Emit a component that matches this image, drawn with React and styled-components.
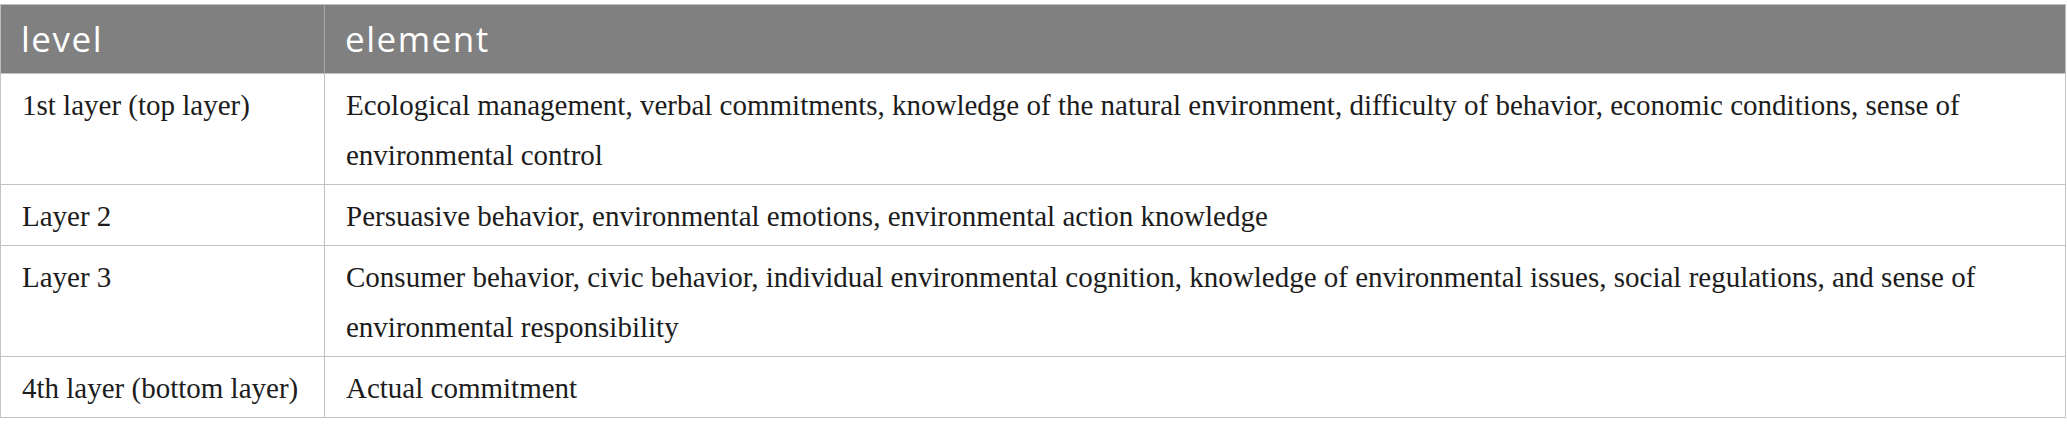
import React from "react";
import styled, { createGlobalStyle } from "styled-components";

const Global = createGlobalStyle`
  html, body { margin: 0; padding: 0; background: #ffffff; }
  body { font-family: "Liberation Serif", "Times New Roman", serif; }
`;

const Page = styled.div`
  padding-top: 4px;
  width: 2066px;
`;

const Table = styled.table`
  width: 100%;
  border-collapse: collapse;
  table-layout: fixed;
  border: 1px solid #bdbdbd;
`;

const HeadCell = styled.th`
  box-sizing: border-box;
  background: #808080;
  color: #ffffff;
  font-family: "Open Sans", "Noto Sans", sans-serif;
  font-weight: 400;
  font-size: 35px;
  letter-spacing: 1.5px;
  text-align: left;
  padding: 0 20px;
  height: 68px;
  line-height: 68px;
  border-left: 1px solid #a9a9a9;
  width: ${(p) => p.$w || "auto"};
  &:first-child { border-left: none; }
`;

const Cell = styled.td`
  font-family: "Liberation Serif", "Times New Roman", serif;
  font-size: 29px;
  line-height: 50px;
  color: #1c1c1c;
  vertical-align: top;
  text-align: left;
  padding: 6px 20px 4px 21px;
  border: 1px solid #c3c3c3;
`;

const rows = [
  {
    level: "1st layer (top layer)",
    element:
      "Ecological management, verbal commitments, knowledge of the natural environment, difficulty of behavior, economic conditions, sense of environmental control",
  },
  {
    level: "Layer 2",
    element:
      "Persuasive behavior, environmental emotions, environmental action knowledge",
  },
  {
    level: "Layer 3",
    element:
      "Consumer behavior, civic behavior, individual environmental cognition, knowledge of environmental issues, social regulations, and sense of environmental responsibility",
  },
  {
    level: "4th layer (bottom layer)",
    element: "Actual commitment",
  },
];

export default function App() {
  return (
    <Page>
      <Global />
      <Table>
        <thead>
          <tr>
            <HeadCell $w="324px">level</HeadCell>
            <HeadCell>element</HeadCell>
          </tr>
        </thead>
        <tbody>
          {rows.map((r) => (
            <tr key={r.level}>
              <Cell>{r.level}</Cell>
              <Cell>{r.element}</Cell>
            </tr>
          ))}
        </tbody>
      </Table>
    </Page>
  );
}
